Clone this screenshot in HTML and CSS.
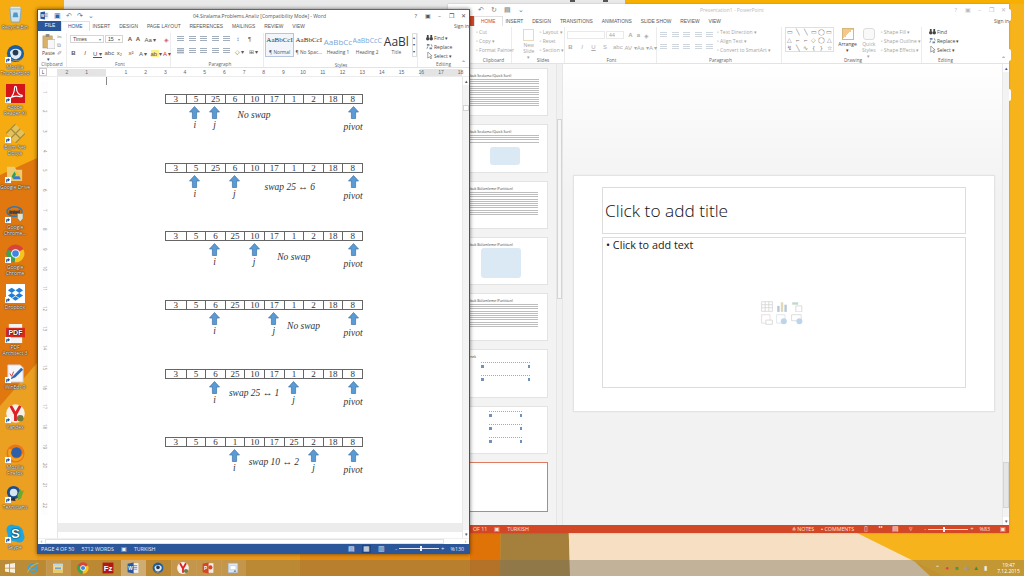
FILE: index.html
```html
<!DOCTYPE html>
<html lang="tr">
<head>
<meta charset="utf-8">
<title>Desktop</title>
<link rel="stylesheet" href="styles.css">
</head>
<body>
<svg class="defs" width="0" height="0" aria-hidden="true">
  <defs>
    <symbol id="up" viewBox="0 0 11 13"><path d="M5.5.5 10.5 6H7.6v6.5H3.4V6H.5z" fill="#5b9bd5" stroke="#3f73a3" stroke-width=".7"/></symbol>
    <symbol id="short" viewBox="0 0 7 7"><rect width="7" height="7" fill="#fff"/><path d="M2 6V3.2h2.4M3.3 1.8 5 3.2 3.3 4.7" fill="none" stroke="#1b4fa8" stroke-width="1.2"/></symbol>
    <symbol id="bin" viewBox="0 0 20 20"><path d="M4 5h12l-1.5 14h-9z" fill="#cfe4ee" stroke="#7ea7bf"/><path d="M5 3h10l1 2H4z" fill="#eef6fa" stroke="#8fb2c6" stroke-width=".6"/><path d="M8 9h4l1 5H7z" fill="#4d9ac6"/></symbol>
    <symbol id="tbird" viewBox="0 0 20 20"><circle cx="10" cy="10" r="9" fill="#1d5f9e"/><path d="M4 9c1-4 9-6 12-1 1 3-1 7-5 8-3 0-6-2-6-4z" fill="#dfe9f2"/><circle cx="10" cy="9" r="3" fill="#243a55"/><path d="M3 13c3 5 10 6 14 2-2 4-11 5-14-2z" fill="#e9a43b"/></symbol>
    <symbol id="adobe" viewBox="0 0 20 20"><rect width="20" height="20" fill="#d3151b"/><path d="M3 16c4-2 6-8 6-12 0-2 2-2 2 0 0 5 3 8 6 8 1 1-1 2-4 1-3-.5-7 0-10 3z" fill="none" stroke="#fff" stroke-width="1.2"/></symbol>
    <symbol id="gold" viewBox="0 0 20 20"><path d="M10 0 20 10 10 20 0 10z" fill="#e3c25e"/><path d="M5 5 15 15M10 0 0 10M15 5 5 15M10 20 20 10" stroke="#a88a35" stroke-width="1.2"/></symbol>
    <symbol id="drive" viewBox="0 0 20 20"><path d="M1 3h8l2 3h6v12H1z" fill="#eccb72"/><path d="M9 8h3l4 7h-3z" fill="#f4c430"/><path d="M9 8l1.500 3-3 5-1.500-3z" fill="#2f9e55"/><path d="M7.500 16h8l-1.500-3H9z" fill="#3a78d8"/></symbol>
    <symbol id="intel" viewBox="0 0 20 20"><ellipse cx="9" cy="8" rx="8" ry="5" fill="none" stroke="#2d78b8" stroke-width="1.600"/><text x="9" y="10" font-size="6" font-family="Liberation Sans" fill="#2d5f95" text-anchor="middle">intel</text><path d="M12 10h6v5l-3 4-3-4z" fill="#e6e2c8" stroke="#547a9c" stroke-width=".6"/></symbol>
    <symbol id="chrome" viewBox="0 0 20 20"><circle cx="10" cy="10" r="9.500" fill="#d9443a"/><path d="M10 10 18.300 5.500A9.500 9.500 0 0 1 9 19.500z" fill="#f6c51c"/><path d="M10 10 9 19.500A9.500 9.500 0 0 1 1.500 5.800z" fill="#3aa655"/><circle cx="10" cy="10" r="4.600" fill="#fff"/><circle cx="10" cy="10" r="3.500" fill="#3f85e4"/></symbol>
    <symbol id="dropbox" viewBox="0 0 20 20"><rect width="20" height="20" fill="#fff"/><path d="M6 4l4 2.700-4 2.700-4-2.700zM14 4l4 2.700-4 2.700-4-2.700zM6 9.400l4 2.700-4 2.700-4-2.700zM14 9.400l4 2.700-4 2.700-4-2.700zM10 13l3.500 2.300L10 17.500l-3.500-2.200z" fill="#1f7fd6"/></symbol>
    <symbol id="pdf" viewBox="0 0 20 20"><path d="M3 0h14v20H3z" fill="#f3f3f3"/><rect y="4" width="20" height="10" fill="#d92a1c"/><text x="10" y="12" font-size="7.500" font-weight="700" font-family="Liberation Sans" fill="#fff" text-anchor="middle">PDF</text></symbol>
    <symbol id="winedt" viewBox="0 0 20 20"><path d="M2 1h13l3 3v15H2z" fill="#f6f7fa" stroke="#ccd"/><path d="M5 15 16 4l2 2-8 8-5 2" fill="#2f68b5"/><path d="M4 10l2 3 2-5" fill="none" stroke="#d04040"/></symbol>
    <symbol id="yandex" viewBox="0 0 20 20"><circle cx="10" cy="10" r="9.800" fill="#f7f1ea"/><path d="M5 2l5 9v7M15 2l-5 9" fill="none" stroke="#dd1f26" stroke-width="3"/><circle cx="15" cy="15" r="3.500" fill="#6f7b3f"/></symbol>
    <symbol id="firefox" viewBox="0 0 20 20"><circle cx="10" cy="10" r="9.500" fill="#e8751a"/><circle cx="11" cy="9" r="5.500" fill="#2f5fa6"/><path d="M3 5c-3 8 3 14 9 13 4-1 7-5 6-9-1 5-5 7-9 6-3-1-5-5-3-9z" fill="#f2a31d"/></symbol>
    <symbol id="tex" viewBox="0 0 20 20"><circle cx="8" cy="9" r="7" fill="#1d4f8c"/><circle cx="8" cy="9" r="4" fill="#d8e6f3"/><path d="M12 12l3-7 2 3 2-2-3 9-3 2z" fill="#6aa832"/><path d="M3 17l6-3 1 4z" fill="#2e2e2e"/></symbol>
    <symbol id="skype" viewBox="0 0 20 20"><circle cx="6" cy="6" r="5.500" fill="#1ea6e0"/><circle cx="14" cy="14" r="5.500" fill="#1ea6e0"/><circle cx="10" cy="10" r="8.500" fill="#1ea6e0"/><text x="10" y="15" font-size="14" font-weight="700" font-family="Liberation Sans" fill="#fff" text-anchor="middle">S</text></symbol>
    <symbol id="win" viewBox="0 0 12 12"><path d="M0 1.700 5 1v4.600H0zM6 .8 12 0v5.600H6zM0 6.500h5V11l-5-.7zM6 6.500h6V12l-6-.8z" fill="#f7efe2"/></symbol>
    <symbol id="ie" viewBox="0 0 20 20"><circle cx="10" cy="10" r="7" fill="none" stroke="#3ca3dc" stroke-width="3"/><path d="M4 10h12" stroke="#3ca3dc" stroke-width="2.500"/><path d="M1 17c3-7 10-14 18-15" fill="none" stroke="#f3c428" stroke-width="1.200"/></symbol>
    <symbol id="folder" viewBox="0 0 20 20"><path d="M2 3h16v15H2z" fill="#f3dc94"/><path d="M2 3h16v4H2z" fill="#bcd7ea"/><path d="M5 9h10v3H5z" fill="#6fa6cf"/><path d="M2 13h16v5H2z" fill="#e9c868"/></symbol>
    <symbol id="fz" viewBox="0 0 20 20"><rect x="1" y="1" width="18" height="18" fill="#b01818"/><text x="10" y="15" font-size="13" font-weight="700" font-family="Liberation Sans" fill="#fff" text-anchor="middle">Fz</text></symbol>
    <symbol id="word" viewBox="0 0 20 20"><rect x="7" y="2" width="12" height="16" fill="#eef2f8"/><path d="M9 6h8M9 9h8M9 12h8" stroke="#2b579a"/><path d="M1 3l10-2v18L1 17z" fill="#2b579a"/><text x="6" y="13" font-size="8" font-weight="700" font-family="Liberation Sans" fill="#fff" text-anchor="middle">W</text></symbol>
    <symbol id="ppt" viewBox="0 0 20 20"><rect x="7" y="2" width="12" height="16" fill="#f6ece6"/><circle cx="14" cy="9" r="3.500" fill="#d24726"/><path d="M1 3l10-2v18L1 17z" fill="#d24726"/><text x="6" y="13" font-size="8" font-weight="700" font-family="Liberation Sans" fill="#fff" text-anchor="middle">P</text></symbol>
    <symbol id="snip" viewBox="0 0 20 20"><rect x="2" y="2" width="16" height="16" fill="#dfe9f4" stroke="#9db5d0"/><path d="M5 6h10v7H5z" fill="#fff" stroke="#a8c0d8"/><path d="M11 17l2-4 3 3z" fill="#5f8fc0"/></symbol>
    <symbol id="paste" viewBox="0 0 14 16"><rect x="1" y="2" width="10" height="13" fill="#d9b26a" stroke="#b08f55" stroke-width=".6"/><rect x="4" y="0" width="4" height="3" fill="#8a8a8a"/><rect x="6" y="6" width="8" height="10" fill="#f7f7f7" stroke="#a8a8a8" stroke-width=".6"/></symbol>
    <symbol id="binoc" viewBox="0 0 8 8"><circle cx="2" cy="5.500" r="2" fill="#444"/><circle cx="6" cy="5.500" r="2" fill="#444"/><path d="M1 1h2v3H1zM5 1h2v3H5z" fill="#444"/></symbol>
    <symbol id="repl" viewBox="0 0 8 8"><path d="M1 1h3v2H1zM4 5h3v2H4z" fill="#6d86a8"/><path d="M6 1.500 7 4M2 4 1 6.500" stroke="#444" stroke-width=".7"/></symbol>
    <symbol id="sel" viewBox="0 0 8 8"><path d="M2 0v7l2-1.500L5.500 8 6.500 7 5 4.800 7 4.500z" fill="#fff" stroke="#555" stroke-width=".6"/></symbol>
    <symbol id="ph-table" viewBox="0 0 10 9"><path d="M.5.500h9v8h-9zM.5 3h9M.5 5.500h9M3.500.500v8M6.500.500v8" fill="none" stroke="#cfcfcf" stroke-width=".6"/></symbol>
    <symbol id="ph-chart" viewBox="0 0 10 9"><path d="M1 4h2v5H1z" fill="#b5c8da"/><path d="M4 1h2v8H4z" fill="#e2d8b4"/><path d="M7 3h2v6H7z" fill="#b5c8da"/></symbol>
    <symbol id="ph-art" viewBox="0 0 10 9"><path d="M1 1h5v2H1z" fill="#bcdacd"/><path d="M4 4h5v5H4z" fill="none" stroke="#d4d4d4" stroke-width=".7"/></symbol>
    <symbol id="ph-pic" viewBox="0 0 10 9"><path d="M.5.500h7v7h-7z" fill="none" stroke="#e3d3d3" stroke-width=".6"/><path d="M4 5h5.500v3.500H4z" fill="#fff" stroke="#cfcfcf" stroke-width=".6"/></symbol>
    <symbol id="ph-online" viewBox="0 0 10 9"><path d="M.5.500h7v7h-7z" fill="none" stroke="#d6dee6" stroke-width=".6"/><circle cx="6.500" cy="6" r="2.500" fill="#bdd5ec"/></symbol>
    <symbol id="ph-vid" viewBox="0 0 10 9"><path d="M.5.500h8v5h-8z" fill="none" stroke="#d2d2d2" stroke-width=".6"/><circle cx="7" cy="6" r="2.500" fill="#bdd5ec"/></symbol>
  </defs>
</svg>

<main class="desktop">
  <svg class="wallpaper" viewBox="0 0 1024 576" preserveAspectRatio="none" aria-hidden="true">
    <rect width="1024" height="576" fill="#f6ab10"/>
    <path d="M0 400 37 360 37 576 0 576z" fill="#eca022"/>
    <path d="M0 175 37 158 470 158 470 576 37 576 37 363 0 406z" fill="#e0780f"/>
    <path d="M37 554H300V576H37z" fill="#eb9a1c"/>
    <path d="M300 554H470V576H300z" fill="#e58a12"/>
    <path d="M470 300H503L500 576H470z" fill="#df7308"/>
    <path d="M503 300H562L570 576H500z" fill="#a57f3c"/>
    <path d="M562 300H857L913 560 930 576H570z" fill="#f6dfc3"/>
    <path d="M857 533 944 576H1024V0H1009V533z" fill="#f7b31c"/>
    <path d="M625 0H1024V4H625z" fill="#f7b000"/>
  </svg>

  <div class="back-window"><i class="back-mark"></i><i class="back-mark"></i></div>

  <nav class="icons">
    <a class="dicon"><svg class="dimg"><use href="#bin"/></svg><span class="one">Recycle Bin</span></a>
    <a class="dicon"><svg class="dimg"><use href="#tbird"/></svg><svg class="dshort"><use href="#short"/></svg><span>Mozilla Thunderbird</span></a>
    <a class="dicon"><svg class="dimg"><use href="#adobe"/></svg><svg class="dshort"><use href="#short"/></svg><span>Adobe Reader XI</span></a>
    <a class="dicon"><svg class="dimg"><use href="#gold"/></svg><svg class="dshort"><use href="#short"/></svg><span>Bilim Net Dosya</span></a>
    <a class="dicon"><svg class="dimg"><use href="#drive"/></svg><svg class="dshort"><use href="#short"/></svg><span class="one">Google Drive</span></a>
    <a class="dicon"><svg class="dimg"><use href="#intel"/></svg><svg class="dshort"><use href="#short"/></svg><span>Google Chrome...</span></a>
    <a class="dicon"><svg class="dimg"><use href="#chrome"/></svg><svg class="dshort"><use href="#short"/></svg><span>Google Chrome</span></a>
    <a class="dicon"><svg class="dimg"><use href="#dropbox"/></svg><svg class="dshort"><use href="#short"/></svg><span class="one">Dropbox</span></a>
    <a class="dicon"><svg class="dimg"><use href="#pdf"/></svg><svg class="dshort"><use href="#short"/></svg><span>PDF Architect 3</span></a>
    <a class="dicon"><svg class="dimg"><use href="#winedt"/></svg><svg class="dshort"><use href="#short"/></svg><span class="one">WinEdt 9</span></a>
    <a class="dicon"><svg class="dimg"><use href="#yandex"/></svg><svg class="dshort"><use href="#short"/></svg><span class="one">Yandex</span></a>
    <a class="dicon"><svg class="dimg"><use href="#firefox"/></svg><svg class="dshort"><use href="#short"/></svg><span>Mozilla Firefox</span></a>
    <a class="dicon"><svg class="dimg"><use href="#tex"/></svg><svg class="dshort"><use href="#short"/></svg><span class="one">TeXnicians</span></a>
    <a class="dicon"><svg class="dimg"><use href="#skype"/></svg><svg class="dshort"><use href="#short"/></svg><span class="one">Skype</span></a>
  </nav>

  <section class="window ppt">
    <header class="ppt-title">
      <div class="qat"><span class="g">↶</span><span class="g">↻</span><span class="g">▤</span><span class="g">⌄</span></div>
      <div class="ppt-name">Presentation1 - PowerPoint</div>
      <div class="winbtns faded"><span>?</span><span>▣</span><span>–</span><span>❐</span><span>✕</span></div>
    </header>
    <div class="tabs ppt-tabs">
      <span class="file ppt-file">FILE</span>
      <span class="active red">HOME</span><span>INSERT</span><span>DESIGN</span><span>TRANSITIONS</span><span>ANIMATIONS</span><span>SLIDE SHOW</span><span>REVIEW</span><span>VIEW</span>
      <span class="signin">Sign in</span>
    </div>
    <div class="ribbon ppt-ribbon">
      <div class="grp p-clip"><div class="grp-body col off">
        <span class="cmd">▫ Cut</span><span class="cmd">▫ Copy ▾</span><span class="cmd">▫ Format Painter</span>
      </div><div class="grp-label">Clipboard</div></div>
      <div class="grp p-slides"><div class="grp-body row-gap">
        <div class="bigcmd off"><i class="newslide"></i><span>New<br>Slide ▾</span></div>
        <div class="col off"><span class="cmd">▫ Layout ▾</span><span class="cmd">▫ Reset</span><span class="cmd">▫ Section ▾</span></div>
      </div><div class="grp-label">Slides</div></div>
      <div class="grp p-font"><div class="grp-body col off">
        <div class="tool-row"><span class="combo w38"></span><span class="combo w18">44</span><b class="t">A</b><b class="t">a</b><span class="t">◈</span></div>
        <div class="tool-row spaced"><b class="t">B</b><i class="t">I</i><u class="t">U</u><span class="t">S</span><span class="t">abc</span><span class="t">AV ▾</span><span class="t">Aa ▾</span><span class="t">A ▾</span></div>
      </div><div class="grp-label">Font</div></div>
      <div class="grp p-para"><div class="grp-body row-gap off">
        <div class="col"><div class="tool-row spaced"><i class="lines"></i><i class="lines"></i><i class="lines"></i><i class="lines"></i><i class="lines"></i></div><div class="tool-row spaced"><i class="lines"></i><i class="lines"></i><i class="lines"></i><i class="lines"></i><i class="lines"></i></div></div>
        <div class="col"><span class="cmd">▫ Text Direction ▾</span><span class="cmd">▫ Align Text ▾</span><span class="cmd">▫ Convert to SmartArt ▾</span></div>
      </div><div class="grp-label">Paragraph</div></div>
      <div class="grp p-draw"><div class="grp-body row-gap">
        <div class="shapes off"><span>▭</span><span>╲</span><span>╲</span><span>▭</span><span>◯</span><span>▭</span><span>△</span><span>⌐</span><span>⌐</span><span>◇</span><span>◯</span><span>△</span><span>↯</span><span>╲</span><span>∿</span><span>{</span><span>}</span><span>☆</span></div>
        <div class="bigcmd"><i class="arrange"></i><span>Arrange<br>▾</span></div>
        <div class="bigcmd off"><i class="qstyle"></i><span>Quick<br>Styles ▾</span></div>
        <div class="col off"><span class="cmd">▫ Shape Fill ▾</span><span class="cmd">▫ Shape Outline ▾</span><span class="cmd">▫ Shape Effects ▾</span></div>
      </div><div class="grp-label">Drawing</div></div>
      <div class="grp p-edit"><div class="grp-body col">
        <span class="cmd"><svg class="ic8"><use href="#binoc"/></svg> Find</span><span class="cmd"><svg class="ic8"><use href="#repl"/></svg> Replace ▾</span><span class="cmd"><svg class="ic8"><use href="#sel"/></svg> Select ▾</span>
      </div><div class="grp-label">Editing</div></div>
      <span class="collapse">⌃</span>
    </div>
    <div class="ppt-body">
      <div class="thumbs">
        <div class="thumb"><h4>Çabuk Sıralama (Quick Sort)</h4><div class="tlines tall"></div></div>
        <div class="thumb"><h4>Çabuk Sıralama (Quick Sort)</h4><div class="tlines short"></div><div class="tcode"></div></div>
        <div class="thumb"><h4>Çabuk Bölümleme (Partition)</h4><div class="tlines mid"></div></div>
        <div class="thumb"><h4>Çabuk Bölümleme (Partition)</h4><div class="tcode big"></div></div>
        <div class="thumb"><h4>Çabuk Bölümleme (Partition)</h4><div class="tlines mid"></div></div>
        <div class="thumb"><h4>Örnek</h4><div class="tmini"></div><div class="tmini"></div></div>
        <div class="thumb pad"><div class="tmini"></div><div class="tmini"></div><div class="tmini"></div></div>
        <div class="thumb current"></div>
      </div>
      <div class="vscroll thumb-scroll"><i class="sb-thumb ts"></i></div>
      <div class="stage">
        <div class="slide">
          <div class="ph-title">Click to add title</div>
          <div class="ph-body">
            <div class="ph-text">• Click to add text</div>
            <div class="ph-icons">
              <svg><use href="#ph-table"/></svg><svg><use href="#ph-chart"/></svg><svg><use href="#ph-art"/></svg>
              <svg><use href="#ph-pic"/></svg><svg><use href="#ph-online"/></svg><svg><use href="#ph-vid"/></svg>
            </div>
          </div>
        </div>
      </div>
      <div class="vscroll stage-scroll"><b class="sb-btn">▴</b><i class="sb-thumb tm"></i><b class="sb-btn">▾</b></div>
    </div>
    <footer class="status red-status">
      <span class="st-of">OF 11</span><span class="st-ic">▣</span><span>TURKISH</span>
      <span class="spring"></span>
      <span>≜ NOTES</span><span>▪ COMMENTS</span>
      <span class="views"><b>▯</b><b>⠛</b><b>▤</b><b>▿</b></span>
      <span class="zoomer"><b>-</b><i class="slider mid-a"></i><b>+</b><span>%83</span></span><b class="fit">▣</b>
    </footer>
  </section>

  <section class="window word">
    <header class="word-title">
      <div class="qat word-qat"><svg class="ic10"><use href="#word"/></svg><span class="blue">▣</span><span class="g">↶</span><span class="blue">↷</span><span class="g">⌄</span></div>
      <div class="word-name">04.Siralama.Problems.Analiz [Compatibility Mode] - Word</div>
      <div class="winbtns"><span>?</span><span>▣</span><span>–</span><span>❐</span><span>✕</span></div>
    </header>
    <div class="tabs word-tabs">
      <span class="file">FILE</span>
      <span class="active">HOME</span><span>INSERT</span><span>DESIGN</span><span>PAGE LAYOUT</span><span>REFERENCES</span><span>MAILINGS</span><span>REVIEW</span><span>VIEW</span>
      <span class="signin">Sign in</span>
    </div>
    <div class="ribbon word-ribbon">
      <div class="grp w-clip"><div class="grp-body row-gap">
        <div class="bigcmd"><svg class="paste"><use href="#paste"/></svg><span>Paste<br>▾</span></div>
        <div class="col mini"><span>✂</span><span>⧉</span><span>✐</span></div>
      </div><div class="grp-label">Clipboard</div></div>
      <div class="grp w-font"><div class="grp-body col">
        <div class="tool-row"><span class="combo w34">Times<em>▾</em></span><span class="combo w19">15<em>▾</em></span><b class="t">A</b><b class="t">A</b><span class="t aa">Aa ▾</span><span class="t clear">◈</span></div>
        <div class="tool-row spaced"><b class="t">B</b><i class="t">I</i><u class="t">U ▾</u><span class="t">abc</span><span class="t">x₂</span><span class="t">x²</span><span class="t blue">A ▾</span><span class="t hi">ab ▾</span><span class="t redt">A ▾</span></div>
      </div><div class="grp-label">Font</div></div>
      <div class="grp w-para"><div class="grp-body col">
        <div class="tool-row spaced"><i class="lines"></i><i class="lines"></i><i class="lines"></i><i class="lines"></i><i class="lines"></i><span class="t">↕</span><span class="t">¶</span></div>
        <div class="tool-row spaced"><i class="lines on"></i><i class="lines"></i><i class="lines"></i><i class="lines"></i><i class="lines"></i><span class="t">◇ ▾</span><span class="t">⊞ ▾</span></div>
      </div><div class="grp-label">Paragraph</div></div>
      <div class="grp w-styles"><div class="grp-body gallery">
        <div class="style sel"><b class="sn">AaBbCcI</b><span>¶ Normal</span></div>
        <div class="style"><b class="sn">AaBbCcI</b><span>¶ No Spac...</span></div>
        <div class="style"><b class="h1">AaBbCc</b><span>Heading 1</span></div>
        <div class="style"><b class="h2">AaBbCcC</b><span>Heading 2</span></div>
        <div class="style"><b class="ttl">AaBl</b><span>Title</span></div>
        <div class="gal-scroll"><i>▴</i><i>▾</i><i>▾</i></div>
      </div><div class="grp-label">Styles</div></div>
      <div class="grp w-edit"><div class="grp-body col">
        <span class="cmd"><svg class="ic8"><use href="#binoc"/></svg> Find ▾</span><span class="cmd"><svg class="ic8"><use href="#repl"/></svg> Replace</span><span class="cmd"><svg class="ic8"><use href="#sel"/></svg> Select ▾</span>
      </div><div class="grp-label">Editing</div></div>
      <span class="collapse">⌃</span>
    </div>
    <div class="ruler">
      <span class="tabsel">L</span>
      <div class="ruler-nums"><span>2</span><span>1</span><span></span><span>1</span><span>2</span><span>3</span><span>4</span><span>5</span><span>6</span><span>7</span><span>8</span><span>9</span><span>10</span><span>11</span><span>12</span><span>13</span><span>14</span><span>15</span><span>16</span><span>17</span><span>18</span></div>
    </div>
    <div class="word-body">
      <div class="vruler">
        <span>1</span><span>2</span><span>3</span><span>4</span><span>5</span><span>6</span><span>7</span><span>8</span><span>9</span><span>10</span><span>11</span><span>12</span><span>13</span><span>14</span><span>15</span><span>16</span><span>17</span><span>18</span><span>19</span><span>20</span><span>21</span><span>22</span>
      </div>
      <div class="doc">
        <i class="indent"></i>
        <article class="page">
          <div class="diagram">
            <div class="cells"><span>3</span><span>5</span><span>25</span><span>6</span><span>10</span><span>17</span><span>1</span><span>2</span><span>18</span><span>8</span></div>
            <div class="marks">
              <svg class="arrow c2"><use href="#up"/></svg><svg class="arrow c3"><use href="#up"/></svg><svg class="arrow c10"><use href="#up"/></svg>
              <em class="lab c2">i</em><em class="lab c3">j</em><em class="lab pv c10">pivot</em>
              <em class="msg c5 o5">No swap</em>
            </div>
          </div>
          <div class="diagram">
            <div class="cells"><span>3</span><span>5</span><span>25</span><span>6</span><span>10</span><span>17</span><span>1</span><span>2</span><span>18</span><span>8</span></div>
            <div class="marks">
              <svg class="arrow c2"><use href="#up"/></svg><svg class="arrow c4"><use href="#up"/></svg><svg class="arrow c10"><use href="#up"/></svg>
              <em class="lab c2">i</em><em class="lab c4">j</em><em class="lab pv c10">pivot</em>
              <em class="msg c7 o8 nudge">swap 25 ↔ 6</em>
            </div>
          </div>
          <div class="diagram">
            <div class="cells"><span>3</span><span>5</span><span>6</span><span>25</span><span>10</span><span>17</span><span>1</span><span>2</span><span>18</span><span>8</span></div>
            <div class="marks">
              <svg class="arrow c3"><use href="#up"/></svg><svg class="arrow c5"><use href="#up"/></svg><svg class="arrow c10"><use href="#up"/></svg>
              <em class="lab c3">i</em><em class="lab c5">j</em><em class="lab pv c10">pivot</em>
              <em class="msg c7 o10">No swap</em>
            </div>
          </div>
          <div class="diagram">
            <div class="cells"><span>3</span><span>5</span><span>6</span><span>25</span><span>10</span><span>17</span><span>1</span><span>2</span><span>18</span><span>8</span></div>
            <div class="marks">
              <svg class="arrow c3"><use href="#up"/></svg><svg class="arrow c6"><use href="#up"/></svg><svg class="arrow c10"><use href="#up"/></svg>
              <em class="lab c3">i</em><em class="lab c6">j</em><em class="lab pv c10">pivot</em>
              <em class="msg c78 o10">No swap</em>
            </div>
          </div>
          <div class="diagram">
            <div class="cells"><span>3</span><span>5</span><span>6</span><span>25</span><span>10</span><span>17</span><span>1</span><span>2</span><span>18</span><span>8</span></div>
            <div class="marks">
              <svg class="arrow c3"><use href="#up"/></svg><svg class="arrow c7"><use href="#up"/></svg><svg class="arrow c10"><use href="#up"/></svg>
              <em class="lab c3">i</em><em class="lab c7">j</em><em class="lab pv c10">pivot</em>
              <em class="msg c5 o8">swap 25 ↔ 1</em>
            </div>
          </div>
          <div class="diagram">
            <div class="cells"><span>3</span><span>5</span><span>6</span><span>1</span><span>10</span><span>17</span><span>25</span><span>2</span><span>18</span><span>8</span></div>
            <div class="marks">
              <svg class="arrow c4"><use href="#up"/></svg><svg class="arrow c8"><use href="#up"/></svg><svg class="arrow c10"><use href="#up"/></svg>
              <em class="lab c4">i</em><em class="lab c8">j</em><em class="lab pv c10">pivot</em>
              <em class="msg c6 o9">swap 10 ↔ 2</em>
            </div>
          </div>
        </article>
        <div class="page-gap"></div>
        <div class="page-next"></div>
      </div>
      <div class="vscroll word-scroll"><b class="sb-btn">▴</b><i class="sb-thumb tw"></i><b class="sb-btn">▾</b></div>
    </div>
    <div class="hscroll"><b class="hs-end">‹</b><i class="hs-thumb"></i><b class="hs-end">›</b></div>
    <footer class="status blue-status">
      <span>PAGE 4 OF 50</span><span>5712 WORDS</span><span class="st-ic">▣</span><span>TURKISH</span>
      <span class="spring"></span>
      <span class="views"><b>▤</b><b class="on">▦</b><b>▥</b></span>
      <span class="zoomer"><b>-</b><i class="slider mid-b"></i><b>+</b><span>%130</span></span>
    </footer>
  </section>

  <div class="edge-bits"><i></i><i></i><i></i></div>

  <footer class="taskbar">
    <div class="start"><svg><use href="#win"/></svg></div>
    <div class="task"><svg><use href="#ie"/></svg></div>
    <div class="task open"><svg><use href="#folder"/></svg></div>
    <div class="task"><svg><use href="#chrome"/></svg></div>
    <div class="task"><svg><use href="#fz"/></svg></div>
    <div class="task open now"><svg><use href="#word"/></svg></div>
    <div class="task"><svg><use href="#tbird"/></svg></div>
    <div class="task open"><svg><use href="#yandex"/></svg></div>
    <div class="task open"><svg><use href="#ppt"/></svg></div>
    <div class="task open"><svg><use href="#snip"/></svg></div>
    <div class="tray">
      <span>⌃</span><span class="tr-red">●</span><span class="tr-green">■</span><span class="tr-grey">◉</span><span class="tr-drive">▲</span><span class="tr-white">▮</span>
      <div class="clock"><span>19:47</span><span>7.12.2015</span></div>
    </div>
  </footer>
</main>
</body>
</html>
```
FILE: styles.css
```css
* { box-sizing: border-box; }
html, body { margin: 0; width: 1024px; height: 576px; overflow: hidden; }
body { font-family: "Open Sans", "Liberation Sans", sans-serif; font-size: 5px; color: #444; }
.defs { position: absolute; }
.desktop { position: relative; width: 1024px; height: 576px; overflow: hidden; }
.wallpaper { position: absolute; inset: 0; width: 1024px; height: 576px; }

.back-window { position: absolute; left: 64px; top: 0; width: 561px; height: 10px; background: #e9e9e9; display: flex; gap: 28px; padding-left: 506px; }
.back-mark { width: 5px; height: 2px; background: #555; }

/* desktop icons */
.icons { position: absolute; left: 0; top: 0; width: 30px; padding-top: 4px; display: flex; flex-direction: column; }
.dicon { position: relative; height: 40px; display: flex; flex-direction: column; align-items: center; color: #fff; font-size: 5px; line-height: 6px; text-align: center; text-shadow: 0 0 1.5px #000, 0 0 1px #000; }
.dimg { width: 19px; height: 19px; flex: none; margin-bottom: 1px; }
.dshort { position: absolute; left: 5px; top: 13px; width: 6px; height: 6px; }
.one { white-space: nowrap; }

/* windows */
.window { position: absolute; background: #fff; display: flex; flex-direction: column; }
.word { left: 37px; top: 9px; width: 433px; height: 545px; border: 1px solid #2b579a; border-top-color: #666; box-shadow: 0 0 4px rgba(0,0,0,.55); }
.ppt { left: 448px; top: 4px; width: 561px; height: 529px; box-shadow: 0 0 2px rgba(0,0,0,.2); }

.word-title, .ppt-title { flex: none; display: flex; align-items: center; position: relative; background: #fff; }
.word-title { height: 11px; }
.ppt-title { height: 12px; color: #aaa; }
.qat { display: flex; align-items: center; font-size: 7px; line-height: 8px; color: #777; }
.word-qat { gap: 5px; padding-left: 2px; }
.ppt-title .qat { gap: 7px; padding-left: 30px; }
.ic10 { width: 9px; height: 9px; }
.g { color: #777; }
.blue { color: #2b62ab; }
.word-name { position: absolute; left: 155px; width: 123px; white-space: nowrap; font-size: 5px; color: #555; }
.ppt-name { position: absolute; left: 252px; white-space: nowrap; font-size: 5px; color: #bbb; }
.winbtns { margin-left: auto; display: flex; gap: 0; font-size: 6px; color: #555; }
.winbtns span { width: 11.800px; text-align: center; }
.faded { color: #bbb; }

.tabs { flex: none; position: relative; display: flex; align-items: center; font-family: "Liberation Sans", sans-serif; font-size: 4.900px; color: #555; background: #fff; white-space: nowrap; }
.word-tabs { height: 10px; gap: 8.900px; }
.ppt-tabs { height: 10px; gap: 8.900px; }
.file { width: 24px; height: 10px; background: #2b579a; color: #fff; text-align: center; line-height: 10px; }
.ppt-file { width: 27px; background: #d24726; }
.tabs .active { color: #2b579a; padding: 2px 6px; margin: 0 -6px 0 -10px; background: #fff; border: 1px solid #e1e1e1; border-bottom: 0; }
.tabs .active.red { color: #d24726; }
.signin { position: absolute; right: 0; font-family: "Open Sans", sans-serif; color: #555; }

.ribbon { flex: none; display: flex; background: #fff; border-bottom: 1px solid #e3e3e3; position: relative; }
.word-ribbon { height: 37px; }
.ppt-ribbon { height: 38px; }
.grp { display: flex; flex-direction: column; border-right: 1px solid #ececec; margin: 2px 0 0; }
.ppt-ribbon .grp { margin-top: 1px; }
.grp-body { flex: 1; min-height: 0; }
.grp-label { flex: none; height: 7px; line-height: 8px; text-align: center; font-size: 4.700px; color: #666; }
.row-gap { display: flex; align-items: flex-start; gap: 4px; }
.col { display: flex; flex-direction: column; }
.w-clip { width: 29px; }
.w-font { width: 104px; padding-left: 3px; }
.w-para { width: 93px; padding-left: 6px; }
.w-styles { width: 154px; padding-left: 1px; }
.w-edit { width: 43px; padding-left: 8px; border-right: 0; }
.p-clip { width: 64px; padding-left: 28px; }
.p-slides { width: 53px; padding-left: 10px; }
.p-font { width: 92px; padding-left: 2px; }
.p-para { width: 125px; padding-left: 3px; }
.p-draw { width: 140px; padding-left: 3px; }
.p-edit { width: 40px; padding-left: 7px; border-right: 0; }
.off { opacity: .5; }
.p-font .grp-body, .p-para .col:first-child { padding-top: 2px; }

.cmd { display: flex; align-items: center; gap: 1px; height: 9px; white-space: nowrap; font-size: 5px; }
.ic8 { width: 7px; height: 7px; }
.bigcmd { display: flex; flex-direction: column; align-items: center; text-align: center; font-size: 5px; line-height: 6px; gap: 1px; }
.paste { width: 13px; height: 15px; margin-top: 1px; }
.w-clip .row-gap { gap: 2px; padding-left: 4px; }
.mini { font-size: 5.500px; line-height: 8px; color: #888; }
.newslide { width: 11px; height: 12px; border: 1px solid #d8b578; background: #fff; margin-top: 2px; }
.arrange { width: 12px; height: 12px; margin-top: 1px; background: linear-gradient(135deg, #f3c98b 50%, #fff 50%); border: 1px solid #d8b578; }
.qstyle { width: 12px; height: 12px; margin-top: 1px; border: 1px solid #bbb; border-radius: 3px; background: #f4f4f4; }

.tool-row { display: flex; align-items: center; gap: 1px; height: 12px; white-space: nowrap; }
.spaced { gap: 4.500px; }
.t { font-size: 6px; font-style: normal; text-decoration: none; color: #555; font-family: "Liberation Sans", sans-serif; min-width: 7px; text-align: center; }
i.t { font-style: italic; }
u.t { text-decoration: underline; }
.w-font .tool-row:first-child { margin-bottom: 2px; }
.aa { margin-left: 2px; }
.clear { color: #c66; margin-left: 6px; }
.hi { background: #fbf28a; }
.redt { color: #c22; }
.combo { display: flex; justify-content: space-between; align-items: center; height: 8px; padding: 0 2px; border: 1px solid #d5d5d5; font-size: 5.200px; font-family: "Liberation Sans", sans-serif; }
.combo em { font-style: normal; font-size: 4px; color: #777; }
.w34 { width: 35px; }
.w19 { width: 19px; margin-right: 2px; }
.w38 { width: 38px; }
.w18 { width: 18px; margin-right: 2px; }
.lines { width: 7px; height: 6px; flex: none; background: repeating-linear-gradient(#a3aebd 0 1px, transparent 1px 2px); }
.lines.on { background-color: #cfe0f1; }

.gallery { display: flex; height: 24px; flex: none; margin-bottom: 4px; }
.style { width: 29.200px; height: 24px; display: flex; flex-direction: column; align-items: center; justify-content: space-between; padding: 3px 0 2px; font-size: 4.800px; white-space: nowrap; color: #555; overflow: hidden; }
.style.sel { border: 1px solid #b4c5dd; background: #f2f6fb; padding-top: 2px; padding-bottom: 1px; }
.style b { font-weight: 400; font-family: "Liberation Serif", serif; }
.sn { font-size: 7px; color: #333; }
.style .h1 { font-size: 8px; font-family: "Open Sans", sans-serif; color: #7ba7d7; }
.style .h2 { font-size: 7px; font-family: "Open Sans", sans-serif; color: #7ba7d7; }
.style .ttl { font-size: 12px; line-height: 11px; font-family: "Open Sans", sans-serif; color: #333; }
.gal-scroll { width: 5px; margin-left: 1px; display: flex; flex-direction: column; font-size: 4px; line-height: 8px; text-align: center; border: 1px solid #ddd; }
.gal-scroll i { font-style: normal; height: 7px; }
.w-edit .cmd { height: 9.500px; }
.collapse { position: absolute; right: 3px; bottom: 0; font-size: 6px; color: #666; }

.shapes { width: 55px; height: 25px; display: grid; grid-template-columns: repeat(6, 1fr); font-size: 6px; line-height: 8px; text-align: center; border: 1px solid #d9d9d9; color: #555; opacity: .8; }

/* word ruler + doc */
.ruler { flex: none; height: 9px; display: flex; background: #fff; border-bottom: 1px solid #ececec; }
.tabsel { width: 8px; height: 8px; margin-left: 1px; border: 1px solid #ccc; font-size: 5px; line-height: 6px; text-align: center; }
.ruler-nums { margin-left: 10px; display: flex; width: 405px; height: 7px; margin-top: 1px; background: linear-gradient(90deg, #e4e4e4 0 49px, #fff 49px 363px, #e4e4e4 363px); font-size: 5px; line-height: 7px; color: #666; font-family: "Liberation Sans", sans-serif; }
.ruler-nums span { width: 19.700px; flex: none; text-align: center; }

.word-body { flex: 1; min-height: 0; display: flex; }
.vruler { flex: none; width: 20px; padding-top: 5px; border-right: 1px solid #e6e6e6; display: flex; flex-direction: column; overflow: hidden; background: #fff; }
.vruler span { flex: none; height: 19.700px; width: 7px; margin-left: 3px; writing-mode: vertical-rl; text-align: center; line-height: 7px; font-size: 4.500px; color: #888; background: #fdfdfd; }
.doc { position: relative; flex: 1; min-width: 0; display: flex; flex-direction: column; background: #fff; overflow: hidden; }
.indent { position: absolute; left: 48px; top: -8px; width: 1px; height: 16px; background: #888; }
.page { flex: none; height: 446px; padding: 17px 0 0 107px; background: #fff; overflow: hidden; }
.page-gap { flex: none; height: 9px; background: #ececec; }
.page-next { flex: 1; background: #fff; }
.diagram { height: 68.700px; width: 198px; }
.cells { display: grid; grid-template-columns: repeat(10, 1fr); height: 10px; border: 1px solid #666; }
.cells span { border-left: 1px solid #666; text-align: center; font: 9px/8px "Liberation Serif", serif; color: #333; }
.cells span:first-child { border-left: 0; }
.marks { display: grid; grid-template-columns: repeat(10, 19.800px); grid-template-rows: 13px 10px; margin-top: 2px; font-family: "Liberation Serif", serif; }
.arrow { grid-row: 1; width: 11px; height: 13px; justify-self: center; }
.lab { grid-row: 2; justify-self: center; font-size: 9.500px; line-height: 10px; color: #333; white-space: nowrap; margin-top: 1px; }
.pv { margin-top: 3px; }
.msg { grid-row: 1 / 3; justify-self: center; white-space: nowrap; font-size: 9.500px; line-height: 8px; color: #333; }
.c2 { grid-column: 2; } .c3 { grid-column: 3; } .c4 { grid-column: 4; } .c5 { grid-column: 5; }
.c6 { grid-column: 6; } .c7 { grid-column: 7; } .c8 { grid-column: 8; } .c10 { grid-column: 10; }
.c78 { grid-column: 7 / 9; }
.o5 { padding-top: 5px; } .o8 { padding-top: 8px; } .o9 { padding-top: 9px; } .o10 { padding-top: 10px; }
.nudge { margin-right: 8px; }

.vscroll { flex: none; width: 7px; background: #f3f3f3; display: flex; flex-direction: column; border-left: 1px solid #e8e8e8; position: relative; }
.sb-btn { flex: none; height: 8px; font-size: 5px; line-height: 8px; text-align: center; font-weight: 400; color: #555; background: #fff; }
.sb-thumb { display: block; background: #fff; border: 1px solid #d4d4d4; }
.tw { height: 6px; margin-top: 20px; }
.word-scroll .sb-btn:last-child { margin-top: auto; }
.tm { margin-top: 390px; height: 46px; background: #e6e6e6; }
.stage-scroll .sb-btn:last-child { margin-top: auto; }
.ts { margin-top: 55px; height: 180px; background: #f6f6f6; }
.hscroll { flex: none; height: 6px; display: flex; background: #fff; border-top: 1px solid #f0f0f0; }
.hs-end { width: 7px; font-size: 5px; line-height: 5px; text-align: center; font-weight: 400; color: #555; flex: none; }
.hs-thumb { flex: 1; margin-right: 18px; background: #fff; border: 1px solid #e2e2e2; }

.status { flex: none; display: flex; align-items: center; color: #e9eef6; font-size: 5.300px; gap: 7px; white-space: nowrap; }
.blue-status { height: 9px; background: #2b579a; padding: 0 5px 0 3px; }
.red-status { height: 8px; background: #d24726; padding: 0 3px 0 25px; color: #fbe3dc; }
.st-ic { font-size: 6px; }
.spring { flex: 1; }
.views { display: flex; gap: 6px; font-size: 7px; line-height: 8px; }
.views b { font-weight: 400; width: 9px; text-align: center; }
.views .on { background: #1f4580; }
.zoomer { display: flex; align-items: center; gap: 2px; margin-left: 2px; }
.zoomer b { font-weight: 400; font-size: 6px; }
.slider { display: block; width: 40px; height: 1px; background: #dfe6f1; position: relative; }
.slider::after { content: ""; position: absolute; top: -2px; width: 2px; height: 5px; background: #eef2f8; }
.mid-a::after { left: 15px; }
.mid-b::after { left: 21px; }
.zoomer span { margin-left: 4px; }
.fit { font-weight: 400; font-size: 6px; margin-left: 3px; }

/* ppt body */
.ppt-body { flex: 1; min-height: 0; display: flex; }
.thumbs { flex: none; width: 108px; padding: 4px 8px 0 7px; background: #f3f3f3; overflow: hidden; }
.thumb { height: 48.300px; margin-bottom: 8px; background: #fff; border: 1px solid #e3e3e3; padding: 3px 4px 0 10px; overflow: hidden; }
.thumb h4 { margin: 1px 0 1px; font-size: 3.500px; line-height: 5px; font-weight: 400; color: #444; white-space: nowrap; }
.tlines { background: repeating-linear-gradient(#bdbdbd 0 1px, #fff 1px 2.200px); }
.tlines.tall { height: 28px; width: 73px; }
.tlines.mid { height: 24px; width: 72px; }
.tlines.short { height: 9px; width: 73px; }
.tcode { width: 30px; height: 18px; margin: 3px 0 0 24px; background: #dbe9f5; border-radius: 3px; }
.tcode.big { width: 40px; height: 30px; margin: 1px 0 0 15px; }
.tmini { height: 10px; margin: 3px 0 2px 15px; width: 49px; border-top: 1px dotted #aaa; background: linear-gradient(#6e93bb, #6e93bb) 0 2px / 3px 3px no-repeat, linear-gradient(#6e93bb, #6e93bb) 100% 2px / 2px 3px no-repeat; }
.thumb.pad { padding-top: 3px; }
.thumb.pad .tmini { margin: 1px 0 3px 23px; height: 10px; width: 33px; }
.thumb.current { height: 50px; border: 1px solid #dd7a60; }
.thumb-scroll { background: #f1f1f1; border-left: 1px solid #e6e6e6; border-right: 1px solid #e6e6e6; }
.stage { flex: 1; min-width: 0; display: flex; align-items: center; padding: 0 0 2px 10px; background: linear-gradient(#fff, #f2f2f2 28%); }
.slide { width: 422px; height: 237px; background: #fff; border: 1px solid #e3e3e3; padding: 11px 28px 0 28px; display: flex; flex-direction: column; gap: 3px; box-shadow: 0 0 2px rgba(0,0,0,.05); }
.ph-title { height: 47px; border: 1px solid #dcdcdc; display: flex; align-items: center; padding-left: 2px; font: 300 17.300px/1 "Open Sans", sans-serif; color: #111; }
.ph-body { position: relative; height: 151px; border: 1px solid #dcdcdc; padding: 0 0 0 3px; }
.ph-text { font: 400 10.800px/13px "Open Sans", sans-serif; color: #222; }
.ph-icons { position: absolute; left: 158px; top: 63px; width: 45px; display: grid; grid-template-columns: repeat(3, 12px); gap: 2px 3px; }
.ph-icons svg { width: 12px; height: 11px; }

.edge-bits { position: absolute; left: 1009px; top: 9px; width: 2px; display: flex; flex-direction: column; gap: 28px; }
.edge-bits i { display: block; width: 2px; height: 12px; background: #fff; border-radius: 0 2px 2px 0; }

/* taskbar */
.taskbar { position: absolute; left: 0; right: 0; bottom: 0; height: 16px; display: flex; align-items: center; background: rgba(115, 110, 90, .4); }
.start { width: 20.500px; flex: none; display: flex; justify-content: center; }
.start svg { width: 10px; height: 10px; }
.task { flex: none; width: 25px; height: 16px; display: flex; align-items: center; justify-content: center; }
.task svg { width: 12px; height: 12px; }
.task.open { background: rgba(255, 255, 255, .12); box-shadow: inset 1px 0 rgba(255,255,255,.05); }
.task.now { background: rgba(255, 255, 255, .3); }
.tray { margin-left: auto; display: flex; align-items: center; gap: 4px; font-size: 6px; color: #f3f3f3; padding-right: 2px; }
.tray > span { width: 5.500px; text-align: center; }
.tr-red { color: #d44; }
.tr-green { color: #4a9a4a; }
.tr-grey { color: #9a9a9a; }
.tr-drive { color: #3b8e3b; }
.tr-white { color: #eee; }
.clock { display: flex; flex-direction: column; align-items: center; width: 27px; margin-left: 3px; font-size: 5px; line-height: 6.500px; color: #fff; }
```
